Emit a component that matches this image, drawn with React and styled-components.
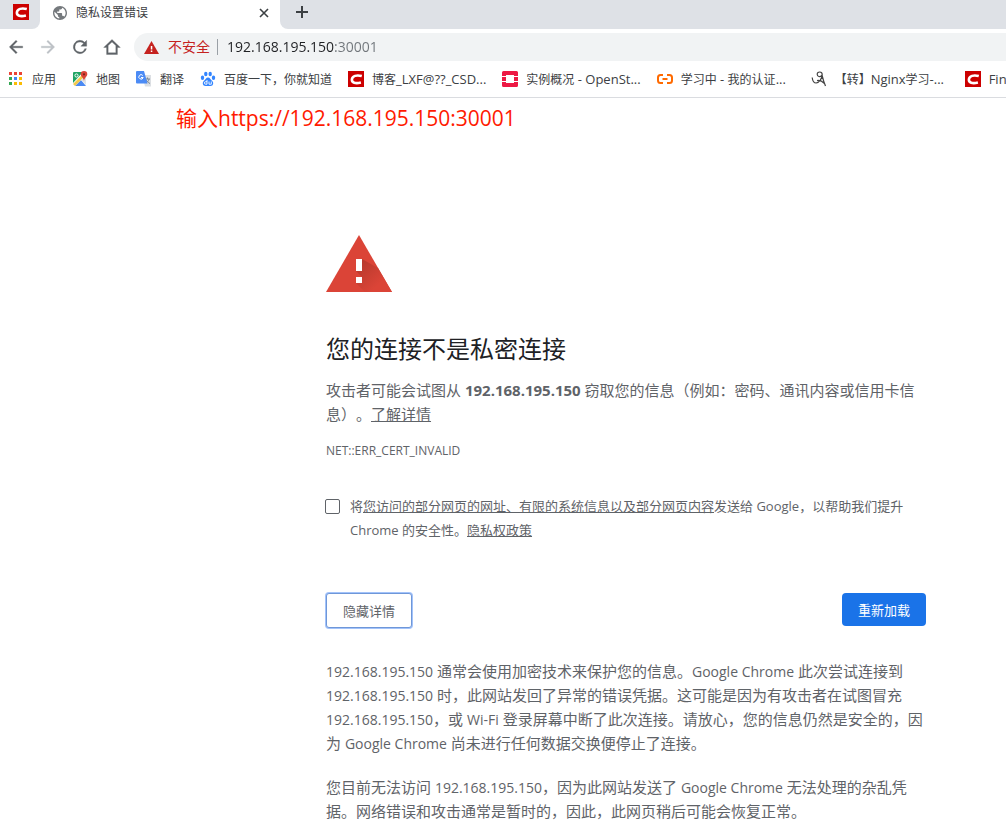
import React from 'react';
import styled, { createGlobalStyle } from 'styled-components';

const GlobalStyle = createGlobalStyle`
  *, *::before, *::after { box-sizing: border-box; }
  body {
    margin: 0;
    background: #fff;
    color: #5f6368;
    font-family: "Open Sans", "Noto Sans CJK SC", sans-serif;
    text-spacing-trim: space-all;
    overflow-x: hidden;
  }
  h1, p { margin: 0; }
  svg { display: block; flex: none; }
`;

const TabStrip = styled.nav`
  display: flex;
  height: 29px;
  background: #fff;
`;

const PinnedTab = styled.button`
  width: 40px;
  padding: 4px 0 9px 13px;
  border: 0;
  border-bottom-right-radius: 8px;
  background: #dee1e6;
`;

const ActiveTab = styled.div`
  display: flex;
  align-items: center;
  width: 240px;
  padding: 0 10px 4px 13px;
  gap: 9px;
  font-size: 12px;
  line-height: 16px;
  color: #3c4043;
`;

const TabTitle = styled.span`
  flex: 1;
`;

const IconButton = styled.button`
  display: flex;
  align-items: center;
  justify-content: center;
  padding: 0;
  border: 0;
  background: none;
  width: ${(p) => p.$size}px;
  height: ${(p) => p.$size}px;
`;

const StripRest = styled.div`
  flex: 1;
  padding: 4px 14px;
  border-bottom-left-radius: 8px;
  background: #dee1e6;
`;

const Toolbar = styled.div`
  display: flex;
  align-items: center;
  height: 36px;
`;

const NavButtons = styled.div`
  display: flex;
  gap: 12px;
  padding: 0 12px 0 6px;
`;

const AddressBar = styled.div`
  display: flex;
  align-items: center;
  flex: 1;
  height: 28px;
  padding-left: 10px;
  border-radius: 14px 0 0 14px;
  background: #f1f3f4;
  font-size: 14px;
  line-height: 20px;
`;

const Insecure = styled.span`
  margin-left: 9px;
  padding-right: 7px;
  color: #c5221f;
`;

const Divider = styled.span`
  width: 1px;
  height: 16px;
  margin-right: 9px;
  background: #9aa0a6;
`;

/* The host is dark and the port after it is grey. */
const Address = styled.input`
  flex: 1;
  min-width: 0;
  height: 20px;
  padding: 0;
  border: 0;
  outline: 0;
  font: inherit;
  color: transparent;
  background: linear-gradient(to right, #202124 108px, #70757a 108px);
  -webkit-background-clip: text;
  background-clip: text;
`;

const Bookmarks = styled.nav`
  display: flex;
  align-items: center;
  gap: 16px;
  height: 33px;
  padding: 0 0 4px 8px;
  border-bottom: 1px solid #dadce0;
  overflow: hidden;
`;

const Bookmark = styled.a`
  display: flex;
  align-items: center;
  flex: none;
  gap: 8px;
  font-size: 12px;
  line-height: 16px;
  color: #3c4043;
  text-decoration: none;
  white-space: nowrap;
`;

const BookmarkTitle = styled.span`
  min-width: ${(p) => (p.$cut ? 114 : 0)}px;
  padding-top: 2px;
`;

const BookmarkLatin = styled.span`
  font-size: 13px;
  line-height: 1;
`;

const Note = styled.p`
  padding: 4px 0 0 176px;
  font-size: 21px;
  line-height: 32px;
  color: #ff1a00;
`;

const Warning = styled.main`
  max-width: 926px;
  padding-left: 326px;
  padding-top: 101px;
  font-size: 15px;
  line-height: 24px;
  white-space: nowrap;
`;

const Title = styled.h1`
  margin-top: 41px;
  font-size: 24px;
  font-weight: 400;
  line-height: 32px;
  color: #202124;
`;

const Paragraph = styled.p`
  margin-top: ${(p) => p.$gap}px;
`;

const Latin = styled.span`
  font-size: 14px;
  line-height: 1;
`;

const ErrorCode = styled.p`
  margin-top: 13px;
  font-size: 12px;
  line-height: 24px;
`;

const Link = styled.a`
  color: inherit;
  text-decoration: underline;
`;

const OptIn = styled.div`
  display: flex;
  align-items: flex-start;
  gap: 10px;
  margin-top: 31px;
  font-size: 13px;
`;

const Checkbox = styled.input`
  appearance: none;
  flex: none;
  width: 15px;
  height: 15px;
  margin: 5px 0 0 -1px;
  border: 1px solid #5f6368;
  border-radius: 2px;
  background: #fff;
`;

const Actions = styled.div`
  display: flex;
  align-items: flex-start;
  justify-content: space-between;
  margin-top: 51px;
`;

const Button = styled.button`
  height: 35px;
  width: 86px;
  padding: 0;
  border: 1px solid #6f97d8;
  border-radius: 3px;
  box-shadow: 0 0 0 1px #a3c3fa;
  background: #fff;
  color: #5f6368;
  font-family: inherit;
  font-size: 13px;
`;

const PrimaryButton = styled(Button)`
  height: 33px;
  width: 84px;
  border: 0;
  border-radius: 4px;
  box-shadow: none;
  background: #1a73e8;
  color: #fff;
`;

const CIcon = () => (
  <svg width="16" height="16" viewBox="0 0 16 16">
    <path fill="#c00" d="M0 0h16v16H0z" />
    <path fill="none" stroke="#fff" strokeWidth="2.600" d="M13.800 5C8.500 3.600 4.300 4.900 3.900 8.400c-.3 3.500 3.500 4.500 9 3.200" />
  </svg>
);

const Globe = () => (
  <svg width="14" height="14" viewBox="2 2 20 20">
    <path fill="#75797d" d="M12 2C6.500 2 2 6.500 2 12s4.500 10 10 10 10-4.500 10-10S17.500 2 12 2zm-1 17.900c-3.900-.5-7-3.900-7-7.900 0-.6.1-1.200.2-1.800L9 15v1c0 1.100.9 2 2 2v1.900zm6.900-2.500c-.3-.8-1-1.400-1.900-1.400h-1v-3c0-.6-.4-1-1-1H8v-2h2c.6 0 1-.4 1-1V7h2c1.100 0 2-.9 2-2v-.4c2.900 1.200 5 4.100 5 7.400 0 2.100-.8 4-2.100 5.400z" />
  </svg>
);

const MaterialIcon = ({ d, color = '#5f6368', size = 20 }) => (
  <svg width={size} height={size} viewBox="0 0 24 24"><path fill={color} stroke={color} strokeWidth=".4" d={d} /></svg>
);

const BACK = 'M20 11H7.830l5.590-5.590L12 4l-8 8 8 8 1.410-1.410L7.830 13H20z';
const FORWARD = 'M12 4l-1.410 1.410L16.170 11H4v2h12.170l-5.580 5.590L12 20l8-8z';
const RELOAD = 'M17.650 6.350A8 8 0 1 0 19.730 14h-2.080A6 6 0 1 1 12 6c1.660 0 3.140.690 4.220 1.780L13 11h7V4z';
const HOME = 'M12 3L2 12.500h3.500V21h13v-8.500H22zm0 2.900l4.600 4.400V19h-9.200v-8.700z';

const AlertIcon = () => (
  <svg width="15" height="13" viewBox="0 0 15 13">
    <path fill="#c5221f" d="M7.500 0L15 13H0z" />
    <path fill="#fff" d="M6.800 5h1.500v3.500H6.800zM6.800 9.500h1.500V11H6.800z" />
  </svg>
);

const AppsIcon = () => {
  const colors = ['#ea4335', '#ea4335', '#ea4335', '#34a853', '#4285f4', '#fbbc04', '#34a853', '#fbbc04', '#fbbc04'];
  return (
    <svg width="16" height="16" viewBox="0 0 16 16">
      {colors.map((c, i) => (
        <rect key={i} x={1 + (i % 3) * 5} y={1 + Math.floor(i / 3) * 5} width="3" height="3" fill={c} />
      ))}
    </svg>
  );
};

const MapIcon = () => (
  <svg width="16" height="16" viewBox="0 0 16 16">
    <path fill="#1fa463" d="M2 1h9L1 12V2a1 1 0 0 1 1-1z" />
    <path fill="#4a89f3" d="M3 15l6-6 5 6z" />
    <path fill="#f2c94c" d="M1 13L12 2l2 2L3 15z" />
    <path fill="#dfe3e6" d="M9 9l5-4v9z" />
    <circle cx="4.500" cy="4.500" r="1.600" fill="none" stroke="#fff" />
    <path fill="#db4437" d="M12 0a3.300 3.300 0 0 0-3.300 3.300C8.700 5.500 11.500 6.500 12 10c.5-3.500 3.300-4.500 3.300-6.700A3.300 3.300 0 0 0 12 0z" />
    <circle cx="12" cy="3.300" r="1.100" fill="#7b231c" />
  </svg>
);

const TranslateIcon = () => (
  <svg width="16" height="16" viewBox="0 0 16 16">
    <path fill="#dcdfe3" d="M6 4h9v11.500H9z" />
    <path fill="none" stroke="#7b8794" d="M9 8h5M11.500 6.500V8M13 8c-.5 2-1.500 3-3 4M10 9c1 1.500 2 2.500 4 3.500" />
    <path fill="#4c8bf5" d="M1 0h7l3.500 12.500H1A1 1 0 0 1 0 11.500V1a1 1 0 0 1 1-1z" />
    <path fill="none" stroke="#fff" d="M6.800 4.500A2.200 2.200 0 1 0 7.200 6.500H5" />
  </svg>
);

const PawIcon = () => (
  <svg width="16" height="16" viewBox="0 0 16 16" fill="#3385ff">
    <ellipse cx="2.500" cy="6.800" rx="1.700" ry="2.200" />
    <ellipse cx="5.800" cy="3" rx="1.700" ry="2.300" />
    <ellipse cx="10.200" cy="3" rx="1.700" ry="2.300" />
    <ellipse cx="13.500" cy="6.800" rx="1.700" ry="2.200" />
    <path d="M8 6.500c2 0 2.500 2 4 3.300 2 1.800 1.500 5.200-1.500 5.200H5.500c-3 0-3.500-3.400-1.500-5.200C5.500 8.500 6 6.500 8 6.500z" />
    <path fill="none" stroke="#fff" strokeWidth=".9" d="M7 9v4.200H5.700a1.200 1.200 0 0 1 0-2.500H7M9 10.500v2.700h2.300v-2.700" />
  </svg>
);

const StackIcon = () => (
  <svg width="16" height="16" viewBox="0 0 16 16" fill="#ed1944">
    <path d="M1.500 0h13A1.500 1.500 0 0 1 16 1.500V5h-4V4H4v1H0V1.500A1.500 1.500 0 0 1 1.500 0zM0 6h4v4H0zM12 6h4v4h-4zM0 11h4v1h8v-1h4v3.500a1.500 1.500 0 0 1-1.500 1.500h-13A1.500 1.500 0 0 1 0 14.500z" />
  </svg>
);

const CloudIcon = () => (
  <svg width="16" height="16" viewBox="0 0 16 16">
    <path fill="none" stroke="#ff6a00" strokeWidth="2" d="M6 4H3.500Q1 4 1 6.500v3Q1 12 3.500 12H6M10 4h2.500Q15 4 15 6.500v3q0 2.500-2.500 2.500H10M5.500 8h5" />
  </svg>
);

const PenIcon = () => (
  <svg width="16" height="16" viewBox="0 0 16 16">
    <path fill="none" stroke="#444" strokeWidth="1.200" d="M1.200 6.500c.3 3 1.600 5.500 4 5.500 2.800-.4 6-4.500 6-8.500 0-3.300-5-3.300-5-.3 0 3 3.500 3 4.800.8.8 3.500 1.500 6.500 3.500 11M6 9.500c2.500-.5 4.500 0 7.500 3" />
  </svg>
);

const DangerIcon = () => (
  <svg width="66" height="57" viewBox="0 0 66 57" role="img" aria-label="警告">
    <defs>
      <linearGradient id="shade" x1="33" y1="30" x2="52" y2="50" gradientUnits="userSpaceOnUse">
        <stop offset="0" stopColor="#b93a2e" />
        <stop offset="1" stopColor="#db4437" />
      </linearGradient>
    </defs>
    <path fill="#db4437" d="M33 0l33 57H0z" />
    <path fill="url(#shade)" d="M36 24l16 9 14 24H39l-9-9 6-6-6-6z" />
    <path fill="#fff" d="M30 24h6v12h-6zM30 42h6v6h-6z" />
  </svg>
);

const bookmarks = [
  ['应用', AppsIcon],
  ['地图', MapIcon],
  ['翻译', TranslateIcon],
  ['百度一下，你就知道', PawIcon],
  ['博客_LXF@??_CSD...', CIcon],
  ['实例概况 - OpenSt...', StackIcon],
  ['学习中 - 我的认证...', CloudIcon],
  ['【转】Nginx学习-...', PenIcon],
  ['Find', CIcon],
];

const splitLatin = (text) =>
  text.split(/([\x20-\x7e]+)/).filter(Boolean).map((part, i) =>
    /^[\x20-\x7e]/.test(part) ? <BookmarkLatin key={i}>{part}</BookmarkLatin> : part
  );

const Ip = () => <Latin>192.168.195.150</Latin>;

export default function App() {
  return (
    <>
      <GlobalStyle />
      <header>
        <TabStrip>
          <PinnedTab aria-label="CSDN"><CIcon /></PinnedTab>
          <ActiveTab>
            <Globe />
            <TabTitle>隐私设置错误</TabTitle>
            <IconButton $size={12} aria-label="关闭">
              <svg width="10" height="10" viewBox="0 0 10 10"><path stroke="#3c4043" strokeWidth="1.600" d="M1 1l8 8M9 1L1 9" /></svg>
            </IconButton>
          </ActiveTab>
          <StripRest>
            <IconButton $size={16} aria-label="新标签页">
              <svg width="12" height="12" viewBox="0 0 12 12"><path stroke="#3c4043" strokeWidth="2" d="M6 0v12M0 6h12" /></svg>
            </IconButton>
          </StripRest>
        </TabStrip>
        <Toolbar>
          <NavButtons>
            <IconButton $size={20} aria-label="后退"><MaterialIcon d={BACK} /></IconButton>
            <IconButton $size={20} aria-label="前进"><MaterialIcon d={FORWARD} color="#bdc1c6" /></IconButton>
            <IconButton $size={20} aria-label="重新加载"><MaterialIcon d={RELOAD} /></IconButton>
            <IconButton $size={20} aria-label="主页"><MaterialIcon d={HOME} /></IconButton>
          </NavButtons>
          <AddressBar>
            <AlertIcon />
            <Insecure>不安全</Insecure>
            <Divider />
            <Address aria-label="地址" defaultValue="192.168.195.150:30001" />
          </AddressBar>
        </Toolbar>
        <Bookmarks>
          {bookmarks.map(([label, Icon]) => (
            <Bookmark href="#" key={label}>
              <Icon />
              <BookmarkTitle $cut={label.endsWith('...')}>{splitLatin(label)}</BookmarkTitle>
            </Bookmark>
          ))}
        </Bookmarks>
      </header>
      <Note>输入https://192.168.195.150:30001</Note>
      <Warning>
        <DangerIcon />
        <Title>您的连接不是私密连接</Title>
        <Paragraph $gap={13}>
          攻击者可能会试图从 <strong>192.168.195.150</strong> 窃取您的信息（例如：密码、通讯内容或信用卡信<br />
          息）。<Link href="#">了解详情</Link>
        </Paragraph>
        <ErrorCode>NET::ERR_CERT_INVALID</ErrorCode>
        <OptIn>
          <Checkbox type="checkbox" id="report" />
          <label htmlFor="report">
            将<Link href="#">您访问的部分网页的网址、有限的系统信息以及部分网页内容</Link>发送给 Google，以帮助我们提升<br />
            Chrome 的安全性。<Link href="#">隐私权政策</Link>
          </label>
        </OptIn>
        <Actions>
          <Button>隐藏详情</Button>
          <PrimaryButton>重新加载</PrimaryButton>
        </Actions>
        <Paragraph $gap={31}>
          <Ip /> 通常会使用加密技术来保护您的信息。<Latin>Google Chrome</Latin> 此次尝试连接到<br />
          <Ip /> 时，此网站发回了异常的错误凭据。这可能是因为有攻击者在试图冒充<br />
          <Ip />，或 <Latin>Wi-Fi</Latin> 登录屏幕中断了此次连接。请放心，您的信息仍然是安全的，因<br />
          为 <Latin>Google Chrome</Latin> 尚未进行任何数据交换便停止了连接。
        </Paragraph>
        <Paragraph $gap={20}>
          您目前无法访问 <Ip />，因为此网站发送了 <Latin>Google Chrome</Latin> 无法处理的杂乱凭<br />
          据。网络错误和攻击通常是暂时的，因此，此网页稍后可能会恢复正常。
        </Paragraph>
      </Warning>
    </>
  );
}
